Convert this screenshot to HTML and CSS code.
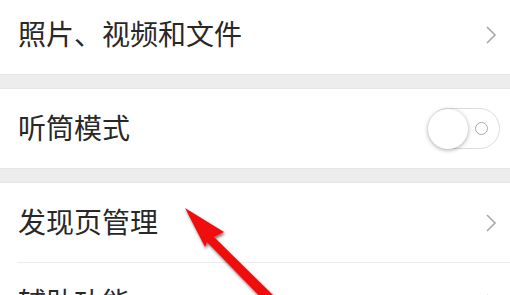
FILE: index.html
```html
<!DOCTYPE html>
<html lang="zh">
<head>
<meta charset="utf-8">
<link rel="stylesheet" href="styles.css">
</head>
<body>
<div class="list">
  <div class="row first">
    <span class="label">照片、视频和文件</span>
    <svg class="chev" width="12" height="20" viewBox="0 0 12 20"><path d="M2 2 L10 10 L2 18" fill="none" stroke="#a8a8a8" stroke-width="1.6"/></svg>
  </div>
  <div class="band"></div>
  <div class="row">
    <span class="label">听筒模式</span>
    <div class="switch"><div class="knob"></div><div class="ring"></div></div>
  </div>
  <div class="band"></div>
  <div class="row">
    <span class="label">发现页管理</span>
    <svg class="chev" width="12" height="20" viewBox="0 0 12 20"><path d="M2 2 L10 10 L2 18" fill="none" stroke="#a8a8a8" stroke-width="1.6"/></svg>
  </div>
  <div class="row divided">
    <span class="label">辅助功能</span>
    <svg class="chev" width="12" height="20" viewBox="0 0 12 20"><path d="M2 2 L10 10 L2 18" fill="none" stroke="#a8a8a8" stroke-width="1.6"/></svg>
  </div>
</div>
<svg class="arrow" width="510" height="295" viewBox="0 0 510 295">
  <defs>
    <filter id="sh" x="-20%" y="-20%" width="140%" height="140%">
      <feDropShadow dx="1" dy="2" stdDeviation="1.5" flood-color="#000" flood-opacity="0.55"/>
    </filter>
  </defs>
  <g filter="url(#sh)" fill="#f00a0a">
    <path d="M185 208 L224 232 L214 237 L278 300 L268 305 L207 242 L205 247 Z"/>
  </g>
</svg>
</body>
</html>
```
FILE: styles.css
```css
html, body {
  margin: 0;
  padding: 0;
  background: #ffffff;
  overflow: hidden;
}
body {
  width: 510px;
  height: 295px;
  position: relative;
  font-family: "Noto Sans CJK SC", "Noto Sans", sans-serif;
}
.list {
  margin-top: -5px;
  display: flex;
  flex-direction: column;
}
.row {
  height: 79px;
  display: flex;
  align-items: center;
  justify-content: space-between;
  padding: 0 12px 0 18px;
  background: #fff;
  box-sizing: border-box;
}
.row.divided {
  height: 81px;
  position: relative;
}
.row.divided::before {
  content: "";
  position: absolute;
  left: 17px;
  right: 0;
  top: 0;
  height: 1px;
  background: #ececec;
}
.label {
  font-size: 28px;
  color: #282828;
  line-height: 1;
  margin-bottom: 3px;
}
.chev {
  display: block;
  margin-right: 1px;
}
.band {
  height: 15px;
  background: #ededed;
  border-top: 1px solid #e6e6e6;
  border-bottom: 1px solid #e6e6e6;
  box-sizing: border-box;
}
.switch {
  width: 72px;
  height: 41px;
  border-radius: 21px;
  border: 1.5px solid #dcdcdc;
  background: #fff;
  position: relative;
  margin-right: -2px;
  box-sizing: border-box;
  display: flex;
  align-items: center;
  justify-content: space-between;
}
.knob {
  width: 40px;
  height: 40px;
  border-radius: 50%;
  background: #fff;
  box-shadow: 0 1px 4px rgba(0,0,0,0.35);
  margin-left: -1px;
}
.ring {
  width: 11px;
  height: 11px;
  border-radius: 50%;
  border: 1.5px solid #aaa;
  margin-right: 11px;
}
.arrow {
  position: absolute;
  left: 0;
  top: 0;
  pointer-events: none;
}
```
